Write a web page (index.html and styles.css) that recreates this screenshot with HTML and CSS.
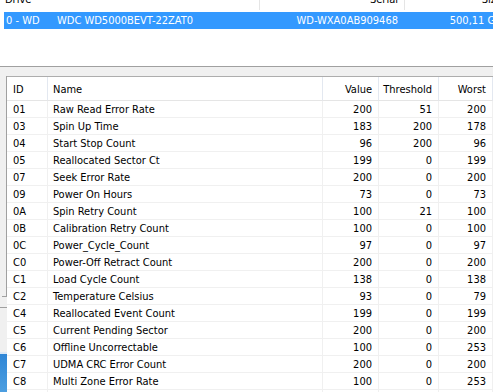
FILE: index.html
```html
<!DOCTYPE html>
<html>
<head>
<meta charset="utf-8">
<link rel="stylesheet" href="styles.css">
</head>
<body>
<div class="app">
  <div class="drive-list">
    <div class="dl-header">
      <div class="dl-c1">Drive</div>
      <div class="dl-c2">Serial</div>
      <div class="dl-c3">Size</div>
    </div>
    <div class="dl-row selected">
      <div class="dl-c1"><span class="dl-id">0 - WD</span><span>WDC WD5000BEVT-22ZAT0</span></div>
      <div class="dl-c2">WD-WXA0AB909468</div>
      <div class="dl-c3">500,11 GB</div>
    </div>
  </div>
  <div class="lower">
    <div class="left-strip">
      <div class="ls-frame"></div>
      <div class="ls-line"></div>
      <div class="ls-desktop"></div>
    </div>
    <div class="smart">
      <table class="smart-table">
        <colgroup>
          <col class="w-id"><col class="w-name"><col class="w-val"><col class="w-thr"><col class="w-worst"><col class="w-fill">
        </colgroup>
        <thead>
          <tr><th class="l id">ID</th><th class="l">Name</th><th>Value</th><th>Threshold</th><th>Worst</th><th class="fill"></th></tr>
        </thead>
        <tbody>
          <tr><td class="l id">01</td><td class="l">Raw Read Error Rate</td><td>200</td><td>51</td><td>200</td><td class="fill"></td></tr>
          <tr><td class="l id">03</td><td class="l">Spin Up Time</td><td>183</td><td>200</td><td>178</td><td class="fill"></td></tr>
          <tr><td class="l id">04</td><td class="l">Start Stop Count</td><td>96</td><td>200</td><td>96</td><td class="fill"></td></tr>
          <tr><td class="l id">05</td><td class="l">Reallocated Sector Ct</td><td>199</td><td>0</td><td>199</td><td class="fill"></td></tr>
          <tr><td class="l id">07</td><td class="l">Seek Error Rate</td><td>200</td><td>0</td><td>200</td><td class="fill"></td></tr>
          <tr><td class="l id">09</td><td class="l">Power On Hours</td><td>73</td><td>0</td><td>73</td><td class="fill"></td></tr>
          <tr><td class="l id">0A</td><td class="l">Spin Retry Count</td><td>100</td><td>21</td><td>100</td><td class="fill"></td></tr>
          <tr><td class="l id">0B</td><td class="l">Calibration Retry Count</td><td>100</td><td>0</td><td>100</td><td class="fill"></td></tr>
          <tr><td class="l id">0C</td><td class="l">Power_Cycle_Count</td><td>97</td><td>0</td><td>97</td><td class="fill"></td></tr>
          <tr><td class="l id">C0</td><td class="l">Power-Off Retract Count</td><td>200</td><td>0</td><td>200</td><td class="fill"></td></tr>
          <tr><td class="l id">C1</td><td class="l">Load Cycle Count</td><td>138</td><td>0</td><td>138</td><td class="fill"></td></tr>
          <tr><td class="l id">C2</td><td class="l">Temperature Celsius</td><td>93</td><td>0</td><td>79</td><td class="fill"></td></tr>
          <tr><td class="l id">C4</td><td class="l">Reallocated Event Count</td><td>199</td><td>0</td><td>199</td><td class="fill"></td></tr>
          <tr><td class="l id">C5</td><td class="l">Current Pending Sector</td><td>200</td><td>0</td><td>200</td><td class="fill"></td></tr>
          <tr><td class="l id">C6</td><td class="l">Offline Uncorrectable</td><td>100</td><td>0</td><td>253</td><td class="fill"></td></tr>
          <tr><td class="l id">C7</td><td class="l">UDMA CRC Error Count</td><td>200</td><td>0</td><td>200</td><td class="fill"></td></tr>
          <tr><td class="l id">C8</td><td class="l">Multi Zone Error Rate</td><td>100</td><td>0</td><td>253</td><td class="fill"></td></tr>
          <tr><td class="l id"></td><td class="l"></td><td></td><td></td><td></td><td class="fill"></td></tr>
        </tbody>
      </table>
    </div>
  </div>
</div>
</body>
</html>
```
FILE: styles.css
```css
html, body {
  margin: 0;
  padding: 0;
  width: 493px;
  height: 392px;
  overflow: hidden;
  background: #f0f0f0;
  font-family: "DejaVu Sans Condensed", "DejaVu Sans", sans-serif;
  font-size: 11px;
  color: #000;
}

.app {
  width: 493px;
  height: 392px;
  overflow: hidden;
  display: flex;
  flex-direction: column;
}

/* top drive list */
.drive-list {
  margin-top: -10px;
  height: 76px;
  flex: none;
  background: #fff;
  border-bottom: 1px solid #a0a0a0;
  overflow: hidden;
}

.dl-header {
  display: flex;
  height: 20px;
  line-height: 20px;
  width: 520px;
}

.dl-header .dl-c1 {
  width: 254px;
  padding-left: 5px;
  border-right: 1px solid #e5e5e5;
}

.dl-header .dl-c2 {
  width: 138px;
  padding-right: 6px;
  text-align: right;
  border-right: 1px solid #e5e5e5;
}

.dl-header .dl-c3 {
  width: 97px;
  padding-right: 6px;
  text-align: right;
}

.dl-row {
  display: flex;
  margin-top: 2px;
  margin-left: 4px;
  height: 17px;
  line-height: 17px;
  width: 520px;
}

.dl-row.selected {
  background: #3399ff;
  color: #fff;
}

.dl-row .dl-c1 {
  width: 253px;
  padding-left: 2px;
  display: flex;
}

.dl-id {
  width: 51px;
}

.dl-row .dl-c2 {
  width: 139px;
  padding-right: 6px;
  text-align: right;
}

.dl-row .dl-c3 {
  width: 98px;
  padding-right: 6px;
  text-align: right;
  white-space: nowrap;
}

/* lower area */
.lower {
  flex: 1;
  display: flex;
  min-height: 0;
}

.left-strip {
  width: 7px;
  flex: none;
  display: flex;
  flex-direction: column;
  padding-top: 9px;
}

.ls-frame {
  height: 220px;
  width: 4px;
  margin-left: 2px;
  border-right: 1px solid #a0a0a0;
  border-bottom: 1px solid #a0a0a0;
  flex: none;
}

.ls-line {
  margin-top: 10px;
  height: 44px;
  border-top: 1px solid #a0a0a0;
  flex: none;
}

.ls-desktop {
  flex: 1;
  border-top: 2px solid #dce8f5;
  background: linear-gradient(180deg, #2f86d6, #4c9ee0);
}

.smart {
  flex: 1;
  margin-top: 9px;
  border-top: 1px solid #adadad;
  background: #fff;
  overflow: hidden;
  min-width: 0;
}

.smart-table {
  table-layout: fixed;
  border-collapse: separate;
  border-spacing: 0;
  width: 540px;
  font-size: 11px;
}

.w-id { width: 41px; }
.w-name { width: 275px; }
.w-val { width: 56px; }
.w-thr { width: 60px; }
.w-worst { width: 54px; }
.w-fill { width: 54px; }

.smart-table th,
.smart-table td {
  padding: 0 6px 0 0;
  text-align: right;
  white-space: nowrap;
  overflow: hidden;
  font-weight: normal;
  box-sizing: content-box;
}

.smart-table th {
  height: 21px;
  padding-top: 2px;
  line-height: 21px;
  border-right: 1px solid #e3e8f0;
  border-bottom: 1px solid #e5e5e5;
}

.smart-table td {
  height: 14px;
  padding-top: 2px;
  line-height: 14px;
  border-right: 1px solid #f0f0f0;
  border-bottom: 1px solid #f0f0f0;
}

.smart-table .l {
  text-align: left;
  padding-left: 5px;
  padding-right: 0;
}

.smart-table .l.id {
  padding-left: 6px;
}

.smart-table .fill {
  border-right: none;
}
```
